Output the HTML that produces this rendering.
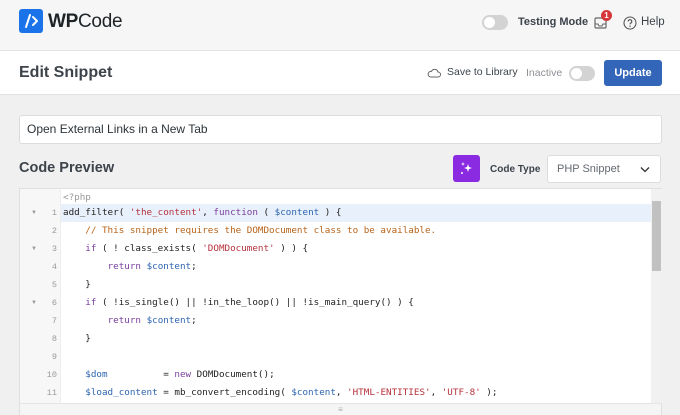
<!DOCTYPE html>
<html><head><style>
*{box-sizing:border-box;margin:0;padding:0}
body{width:680px;height:415px;overflow:hidden;background:#f0f0f1;font-family:"Liberation Sans",sans-serif;color:#3c434a;position:relative}
.hdr{position:absolute;left:0;top:0;width:680px;height:51px;background:#f6f6f6;border-bottom:1px solid #e2e2e2}
.bar{position:absolute;left:0;top:51px;width:680px;height:44px;background:#fff;border-bottom:1px solid #e2e2e2}
.abs{position:absolute}
.tog{position:absolute;width:26px;height:15px;border-radius:8px;background:#d3d3d3}
.tog::after{content:"";position:absolute;left:2px;top:2px;width:11px;height:11px;border-radius:50%;background:#fff}
.code{position:absolute;left:19px;top:188px;width:643px;height:227px;background:#fff;border:1px solid #e0e0e0}
.gut{position:absolute;left:0;top:0;width:41px;height:214px;background:#f7f7f7;border-right:1px solid #eee}
.ln{position:absolute;font:9.25px "DejaVu Sans Mono","Liberation Mono",monospace;white-space:pre;color:#222}
.num{position:absolute;width:20px;text-align:right;left:17px;font:8.5px "Liberation Mono",monospace;color:#999}
.ar{position:absolute;left:11px;font-size:6px;color:#999}
.k{color:#7a3e9d}.s{color:#b5313b}.c{color:#b8641a}.v{color:#2d64b0}
</style></head><body>
<div class="hdr"></div>
<svg class="abs" style="left:19px;top:9px" width="24" height="24" viewBox="0 0 24 24"><rect width="24" height="24" rx="3" fill="#1a73e8"/><path d="M11 6 L7 18" stroke="#fff" stroke-width="2" stroke-linecap="round"/><path d="M14 8 L18 12 L14 16" stroke="#fff" stroke-width="2" fill="none" stroke-linecap="round" stroke-linejoin="round"/></svg>
<div class="abs" style="left:48px;top:11px;font-size:19px;color:#1d2327;letter-spacing:-0.3px"><b>WP</b>Code</div>
<div class="tog" style="left:482px;top:15px"></div>
<div class="abs" style="left:518px;top:16px;font-size:11px;font-weight:bold;color:#3c434a">Testing Mode</div>
<svg class="abs" style="left:594px;top:16px" width="14" height="14" viewBox="0 0 14 14"><rect x="1" y="2" width="11" height="10" rx="1" fill="none" stroke="#666" stroke-width="1.2"/><path d="M1 8h3l1 2h3l1-2h3" fill="none" stroke="#666" stroke-width="1.1"/></svg>
<div class="abs" style="left:601px;top:10px;width:11px;height:11px;border-radius:50%;background:#d63638;color:#fff;font-size:8px;font-weight:bold;text-align:center;line-height:11px">1</div>
<svg class="abs" style="left:623px;top:16px" width="14" height="14" viewBox="0 0 14 14"><circle cx="7" cy="7" r="6" fill="none" stroke="#555" stroke-width="1.1"/><path d="M5.2 5.5a1.8 1.8 0 1 1 2.3 1.7c-.5.2-.5.6-.5 1.2" fill="none" stroke="#555" stroke-width="1.1"/><circle cx="7" cy="10.2" r=".7" fill="#555"/></svg>
<div class="abs" style="left:641px;top:16px;font-size:11.5px;color:#3c434a">Help</div>

<div class="bar"></div>
<div class="abs" style="left:19px;top:64px;font-size:16px;font-weight:bold;color:#3c434a">Edit Snippet</div>
<svg class="abs" style="left:427px;top:68px" width="14" height="10" viewBox="0 0 14 10"><path d="M3.5 9h7.5a2.5 2.5 0 0 0 0-5 3.5 3.5 0 0 0-6.6-.6A2.8 2.8 0 0 0 3.5 9z" fill="none" stroke="#666" stroke-width="1"/></svg>
<div class="abs" style="left:447px;top:66px;font-size:10.5px;color:#3c434a">Save to Library</div>
<div class="abs" style="left:526px;top:67px;font-size:10.5px;color:#8c8f94">Inactive</div>
<div class="tog" style="left:569px;top:66px"></div>
<div class="abs" style="left:604px;top:60px;width:58px;height:26px;background:#3366b9;border-radius:3px;color:#fff;font-size:11px;font-weight:bold;text-align:center;line-height:26px">Update</div>

<div class="abs" style="left:19px;top:115px;width:643px;height:29px;background:#fff;border:1px solid #dcdcde;border-radius:3px;font-size:12px;line-height:27px;padding-left:7px;color:#2c3338">Open External Links in a New Tab</div>
<div class="abs" style="left:19px;top:160px;font-size:14.5px;font-weight:bold;color:#3c434a">Code Preview</div>
<div class="abs" style="left:453px;top:155px;width:27px;height:27px;background:#8a2be2;border-radius:3px"></div>
<svg class="abs" style="left:459px;top:161px" width="15" height="15" viewBox="0 0 15 15"><path d="M9 3l1 3 3 1-3 1-1 3-1-3-3-1 3-1z" fill="#fff"/><path d="M4 1l.5 1.5L6 3l-1.5.5L4 5l-.5-1.5L2 3l1.5-.5z" fill="#fff"/><circle cx="3" cy="12" r="1" fill="#fff"/></svg>
<div class="abs" style="left:490px;top:164px;font-size:10px;font-weight:bold;color:#3c434a">Code Type</div>
<div class="abs" style="left:547px;top:155px;width:114px;height:28px;background:#fff;border:1px solid #dcdcde;border-radius:3px;font-size:11px;line-height:26px;padding-left:9px;color:#646970">PHP Snippet</div>
<svg class="abs" style="left:640px;top:166px" width="10" height="7" viewBox="0 0 10 7"><path d="M1 1.5l4 4 4-4" fill="none" stroke="#333" stroke-width="1.3"/></svg>

<div class="code">
<div class="gut"></div>
<div class="abs" style="left:41px;top:15px;width:590px;height:18px;background:#e8f0fb"></div>
<div class="abs" style="left:631px;top:0;width:11px;height:214px;background:#f1f1f1"></div>
<div class="abs" style="left:632px;top:12px;width:9px;height:70px;background:#c1c1c1"></div>
<div class="abs" style="left:0;top:214px;width:641px;height:12px;background:#f5f5f5;border-top:1px solid #e5e5e5;text-align:center;font-size:8px;color:#aaa;line-height:11px">≡</div>
<div class="ln" style="left:43px;top:3px;color:#999">&lt;?php</div>
<div class="ar" style="top:21px">▼</div><div class="num" style="top:19px">1</div>
<div class="ln" style="left:43px;top:18px">add_filter( <span class="s">'the_content'</span>, <span class="k">function</span> ( <span class="v">$content</span> ) {</div>
<div class="num" style="top:37px">2</div>
<div class="ln" style="left:43px;top:36px">    <span class="c">// This snippet requires the DOMDocument class to be available.</span></div>
<div class="ar" style="top:57px">▼</div><div class="num" style="top:55px">3</div>
<div class="ln" style="left:43px;top:54px">    <span class="k">if</span> ( ! class_exists( <span class="s">'DOMDocument'</span> ) ) {</div>
<div class="num" style="top:73px">4</div>
<div class="ln" style="left:43px;top:72px">        <span class="k">return</span> <span class="v">$content</span>;</div>
<div class="num" style="top:91px">5</div>
<div class="ln" style="left:43px;top:90px">    }</div>
<div class="ar" style="top:111px">▼</div><div class="num" style="top:109px">6</div>
<div class="ln" style="left:43px;top:108px">    <span class="k">if</span> ( !is_single() || !in_the_loop() || !is_main_query() ) {</div>
<div class="num" style="top:127px">7</div>
<div class="ln" style="left:43px;top:126px">        <span class="k">return</span> <span class="v">$content</span>;</div>
<div class="num" style="top:145px">8</div>
<div class="ln" style="left:43px;top:144px">    }</div>
<div class="num" style="top:163px">9</div>
<div class="num" style="top:181px">10</div>
<div class="ln" style="left:43px;top:180px">    <span class="v">$dom</span>          = <span class="k">new</span> DOMDocument();</div>
<div class="num" style="top:199px">11</div>
<div class="ln" style="left:43px;top:198px">    <span class="v">$load_content</span> = mb_convert_encoding( <span class="v">$content</span>, <span class="s">'HTML-ENTITIES'</span>, <span class="s">'UTF-8'</span> );</div>
</div>
</body></html>
